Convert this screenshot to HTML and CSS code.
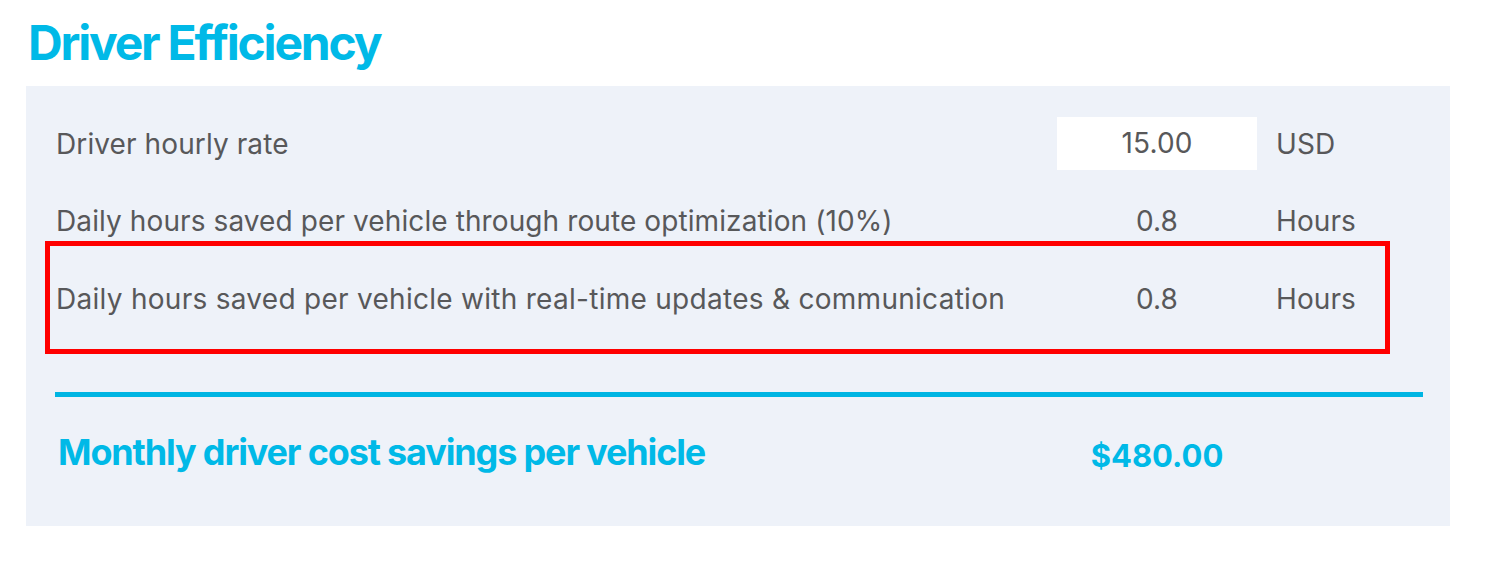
FILE: index.html
```html
<!DOCTYPE html>
<html>
<head>
<meta charset="utf-8">
<link rel="stylesheet" href="styles.css">
</head>
<body>
<h1 class="title">Driver Efficiency</h1>
<section class="panel">
  <div class="rows">
    <div class="row">
      <div class="label">Driver hourly rate</div>
      <div class="value"><div class="input">15.00</div></div>
      <div class="unit">USD</div>
    </div>
    <div class="row">
      <div class="label">Daily hours saved per vehicle through route optimization (10%)</div>
      <div class="value">0.8</div>
      <div class="unit">Hours</div>
    </div>
    <div class="row highlighted">
      <div class="label">Daily hours saved per vehicle with real-time updates &amp; communication</div>
      <div class="value">0.8</div>
      <div class="unit">Hours</div>
    </div>
  </div>
  <div class="divider"></div>
  <div class="row total">
    <div class="label">Monthly driver cost savings per vehicle</div>
    <div class="value">$480.00</div>
    <div class="unit"></div>
  </div>
</section>
</body>
</html>
```
FILE: styles.css
```css
html, body {
  margin: 0;
  padding: 0;
  background: #ffffff;
}
body {
  font-family: Inter, "Noto Sans", sans-serif;
  color: #58585a;
  padding: 0 0 0 26px;
  width: 1424px;
}
.title {
  margin: 0;
  padding: 17px 0 0 2px;
  height: 86px;
  box-sizing: border-box;
  font-size: 48px;
  line-height: 52px;
  font-weight: 700;
  letter-spacing: -2.2px;
  color: #00b9e7;
}
.panel {
  background: #eef2f9;
  padding: 31px 27px 0 30px;
  height: 440px;
  box-sizing: border-box;
}
.rows {
  display: flex;
  flex-direction: column;
  gap: 24px;
}
.row {
  display: flex;
  align-items: center;
  height: 53px;
  font-size: 28px;
  letter-spacing: 0.1px;
  position: relative;
}
.label {
  flex: 1;
}
.value {
  width: 200px;
  text-align: center;
}
.input {
  background: #ffffff;
  height: 53px;
  line-height: 53px;
  text-align: center;
}
.unit {
  width: 166px;
  padding-left: 19px;
  box-sizing: border-box;
}
.highlighted {
  top: 1px;
}
.highlighted .label {
  letter-spacing: 0.28px;
}
.highlighted::after {
  content: "";
  position: absolute;
  left: -11px;
  top: -31px;
  width: 1345px;
  height: 113px;
  border: 5px solid #ff0000;
  box-sizing: border-box;
}
.divider {
  height: 5px;
  background: #00b5e3;
  margin-top: 68px;
  margin-left: -1px;
}
.total {
  margin-top: 28px;
  color: #00b9e7;
  font-weight: 700;
}
.total .label {
  font-size: 36px;
  letter-spacing: -1.15px;
  padding-left: 2px;
}
.total .value {
  font-size: 31px;
  letter-spacing: 0;
  padding-top: 8px;
}
```
